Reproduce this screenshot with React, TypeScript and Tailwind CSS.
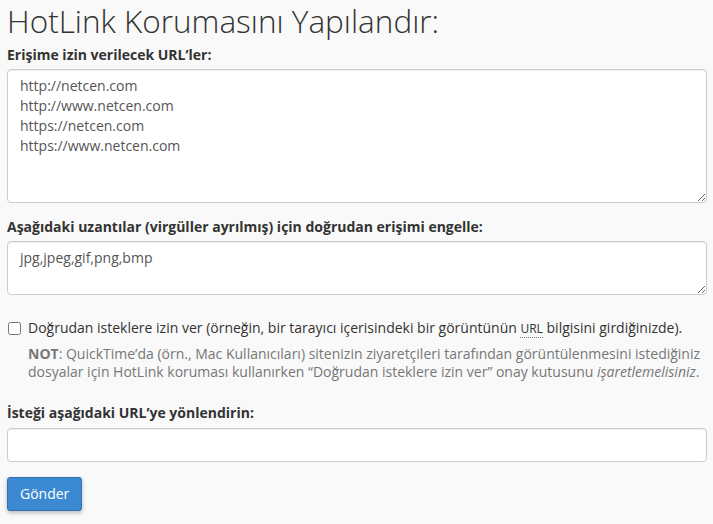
export default function App() {
  return (
    <div className="min-h-[524px] bg-[#f9f9f9] px-[7px] pt-[2px] font-['Open_Sans',sans-serif] text-[14px] text-[#333]">
      <h1 className="text-[31.5px] font-light leading-[38px] text-[#333]">HotLink Korumasını Yapılandır:</h1>

      <div className="mt-[5px]">
        <label className="block font-bold leading-[20px]">Erişime izin verilecek URL’ler:</label>
        <textarea
          className="mt-[4px] block h-[134px] w-[700px] resize-y rounded-[4px] border border-[#ccc] bg-white px-[12px] py-[6px] leading-[20px] text-[#555] shadow-[inset_0_1px_1px_rgba(0,0,0,0.075)] outline-none"
          defaultValue={'http://netcen.com\nhttp://www.netcen.com\nhttps://netcen.com\nhttps://www.netcen.com'}
        />
      </div>

      <div className="mt-[14px]">
        <label className="block font-bold leading-[20px]">Aşağıdaki uzantılar (virgüller ayrılmış) için doğrudan erişimi engelle:</label>
        <textarea
          className="mt-[4px] block h-[54px] w-[700px] resize-y rounded-[4px] border border-[#ccc] bg-white px-[12px] py-[6px] leading-[20px] text-[#555] shadow-[inset_0_1px_1px_rgba(0,0,0,0.075)] outline-none"
          defaultValue="jpg,jpeg,gif,png,bmp"
        />
      </div>

      <div className="mt-[23px] flex items-start gap-[7px]">
        <input type="checkbox" className="mt-[4px] ml-[1px] h-[13px] w-[13px] shrink-0" />
        <div>
          <div className="leading-[20px]">
            Doğrudan isteklere izin ver (örneğin, bir tarayıcı içerisindeki bir görüntünün{' '}
            <abbr className="border-b border-dotted border-[#777] text-[12px] no-underline">URL</abbr> bilgisini girdiğinizde).
          </div>
          <p className="mt-[6px] leading-[18px] text-[#777]">
            <strong>NOT</strong>: QuickTime’da (örn., Mac Kullanıcıları) sitenizin ziyaretçileri tarafından görüntülenmesini istediğiniz
            dosyalar için HotLink koruması kullanırken “Doğrudan isteklere izin ver” onay kutusunu <em>işaretlemelisiniz</em>.
          </p>
        </div>
      </div>

      <div className="mt-[22px]">
        <label className="block font-bold leading-[20px]">İsteği aşağıdaki URL’ye yönlendirin:</label>
        <input
          type="text"
          className="mt-[5px] block h-[34px] w-[700px] rounded-[4px] border border-[#ccc] bg-white px-[12px] text-[#555] shadow-[inset_0_1px_1px_rgba(0,0,0,0.075)] outline-none"
        />
      </div>

      <button className="mt-[15px] h-[34px] rounded-[3px] border border-[#2f73b5] bg-[#3b89d1] px-[12px] leading-[20px] text-white shadow-[0_2px_4px_rgba(0,0,0,0.25)]">
        Gönder
      </button>
    </div>
  )
}
